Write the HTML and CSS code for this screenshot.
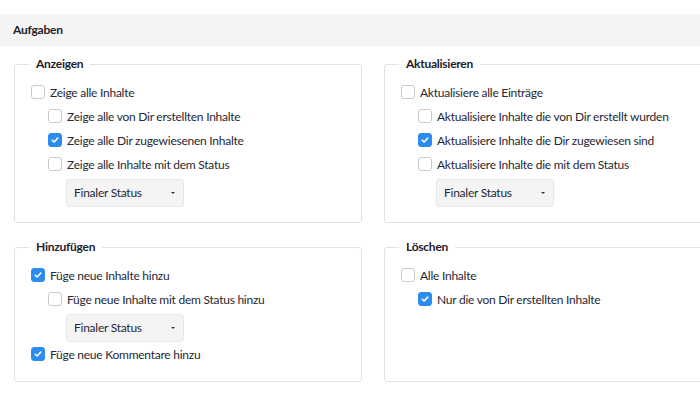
FILE: index.html
```html
<!DOCTYPE html>
<html lang="de">
<head>
    <meta charset="UTF-8">
    <meta name="viewport" content="width=device-width, initial-scale=1.0">
    <title>Aufgaben</title>
    <link rel="stylesheet" href="styles.css">
</head>
<body>
    <div class="section-header">Aufgaben</div>

    <div class="task-grid">
        <fieldset class="task-group">
            <legend>Anzeigen</legend>
            <label class="option"><span class="check"></span>Zeige alle Inhalte</label>
            <div class="sub-options">
                <label class="option"><span class="check"></span>Zeige alle von Dir erstellten Inhalte</label>
                <label class="option"><span class="check is-checked"><svg viewBox="0 0 14 14"><path d="M3.8 7.2l2.2 2.2 4.2-4.6"/></svg></span>Zeige alle Dir zugewiesenen Inhalte</label>
                <label class="option"><span class="check"></span>Zeige alle Inhalte mit dem Status</label>
                <div class="select-box">Finaler Status<span class="caret"></span></div>
            </div>
        </fieldset>

        <fieldset class="task-group">
            <legend>Aktualisieren</legend>
            <label class="option"><span class="check"></span>Aktualisiere alle Einträge</label>
            <div class="sub-options">
                <label class="option"><span class="check"></span>Aktualisiere Inhalte die von Dir erstellt wurden</label>
                <label class="option"><span class="check is-checked"><svg viewBox="0 0 14 14"><path d="M3.8 7.2l2.2 2.2 4.2-4.6"/></svg></span>Aktualisiere Inhalte die Dir zugewiesen sind</label>
                <label class="option"><span class="check"></span>Aktualisiere Inhalte die mit dem Status</label>
                <div class="select-box">Finaler Status<span class="caret"></span></div>
            </div>
        </fieldset>

        <fieldset class="task-group">
            <legend>Hinzufügen</legend>
            <label class="option"><span class="check is-checked"><svg viewBox="0 0 14 14"><path d="M3.8 7.2l2.2 2.2 4.2-4.6"/></svg></span>Füge neue Inhalte hinzu</label>
            <div class="sub-options">
                <label class="option"><span class="check"></span>Füge neue Inhalte mit dem Status hinzu</label>
                <div class="select-box">Finaler Status<span class="caret"></span></div>
            </div>
            <label class="option"><span class="check is-checked"><svg viewBox="0 0 14 14"><path d="M3.8 7.2l2.2 2.2 4.2-4.6"/></svg></span>Füge neue Kommentare hinzu</label>
        </fieldset>

        <fieldset class="task-group">
            <legend>Löschen</legend>
            <label class="option"><span class="check"></span>Alle Inhalte</label>
            <div class="sub-options">
                <label class="option"><span class="check is-checked"><svg viewBox="0 0 14 14"><path d="M3.8 7.2l2.2 2.2 4.2-4.6"/></svg></span>Nur die von Dir erstellten Inhalte</label>
            </div>
        </fieldset>
    </div>
</body>
</html>
```

FILE: styles.css
```css
* {
    margin: 0;
    padding: 0;
    box-sizing: border-box;
}

body {
    font-family: Lato, 'Noto Sans', sans-serif;
    font-size: 12px;
    letter-spacing: -0.25px;
    color: #262733;
    background: white;
    padding-top: 14px;
    width: 700px;
    overflow: hidden;
}

.section-header {
    background: #f4f4f5;
    height: 32px;
    line-height: 32px;
    padding: 0 13px;
    font-weight: 700;
    color: #1f2029;
}

.task-grid {
    display: grid;
    grid-template-columns: 348px 348px;
    column-gap: 22px;
    row-gap: 16px;
    padding: 10px 14px 0;
}

.task-group {
    border: 1px solid #e2e2e4;
    border-radius: 3px;
    padding: 8px 16px 15px;
    min-width: 0;
}

.task-group legend {
    font-weight: 700;
    color: #1f2029;
    padding: 0 7px;
    margin-left: -2px;
    line-height: 16px;
}

.option {
    display: flex;
    align-items: center;
    height: 24px;
    white-space: nowrap;
}

.sub-options {
    padding-left: 17px;
}

.check {
    width: 14px;
    height: 14px;
    border: 1px solid #c9cacd;
    border-radius: 3px;
    margin-right: 5px;
    flex-shrink: 0;
    background: white;
}

.check.is-checked {
    background: #2d8cf0;
    border-color: #2d8cf0;
}

.check svg {
    display: block;
    width: 12px;
    height: 12px;
}

.check svg path {
    fill: none;
    stroke: white;
    stroke-width: 1.8;
    stroke-linecap: round;
    stroke-linejoin: round;
}

.select-box {
    position: relative;
    width: 118px;
    height: 28px;
    line-height: 26px;
    padding: 0 7px;
    margin: 3px 0 0 18px;
    background: #f4f4f5;
    border: 1px solid #e8e8ea;
    border-radius: 3px;
}

.caret {
    position: absolute;
    right: 8px;
    top: 12px;
    border-left: 2px solid transparent;
    border-right: 2px solid transparent;
    border-top: 2px solid #333;
}
```
